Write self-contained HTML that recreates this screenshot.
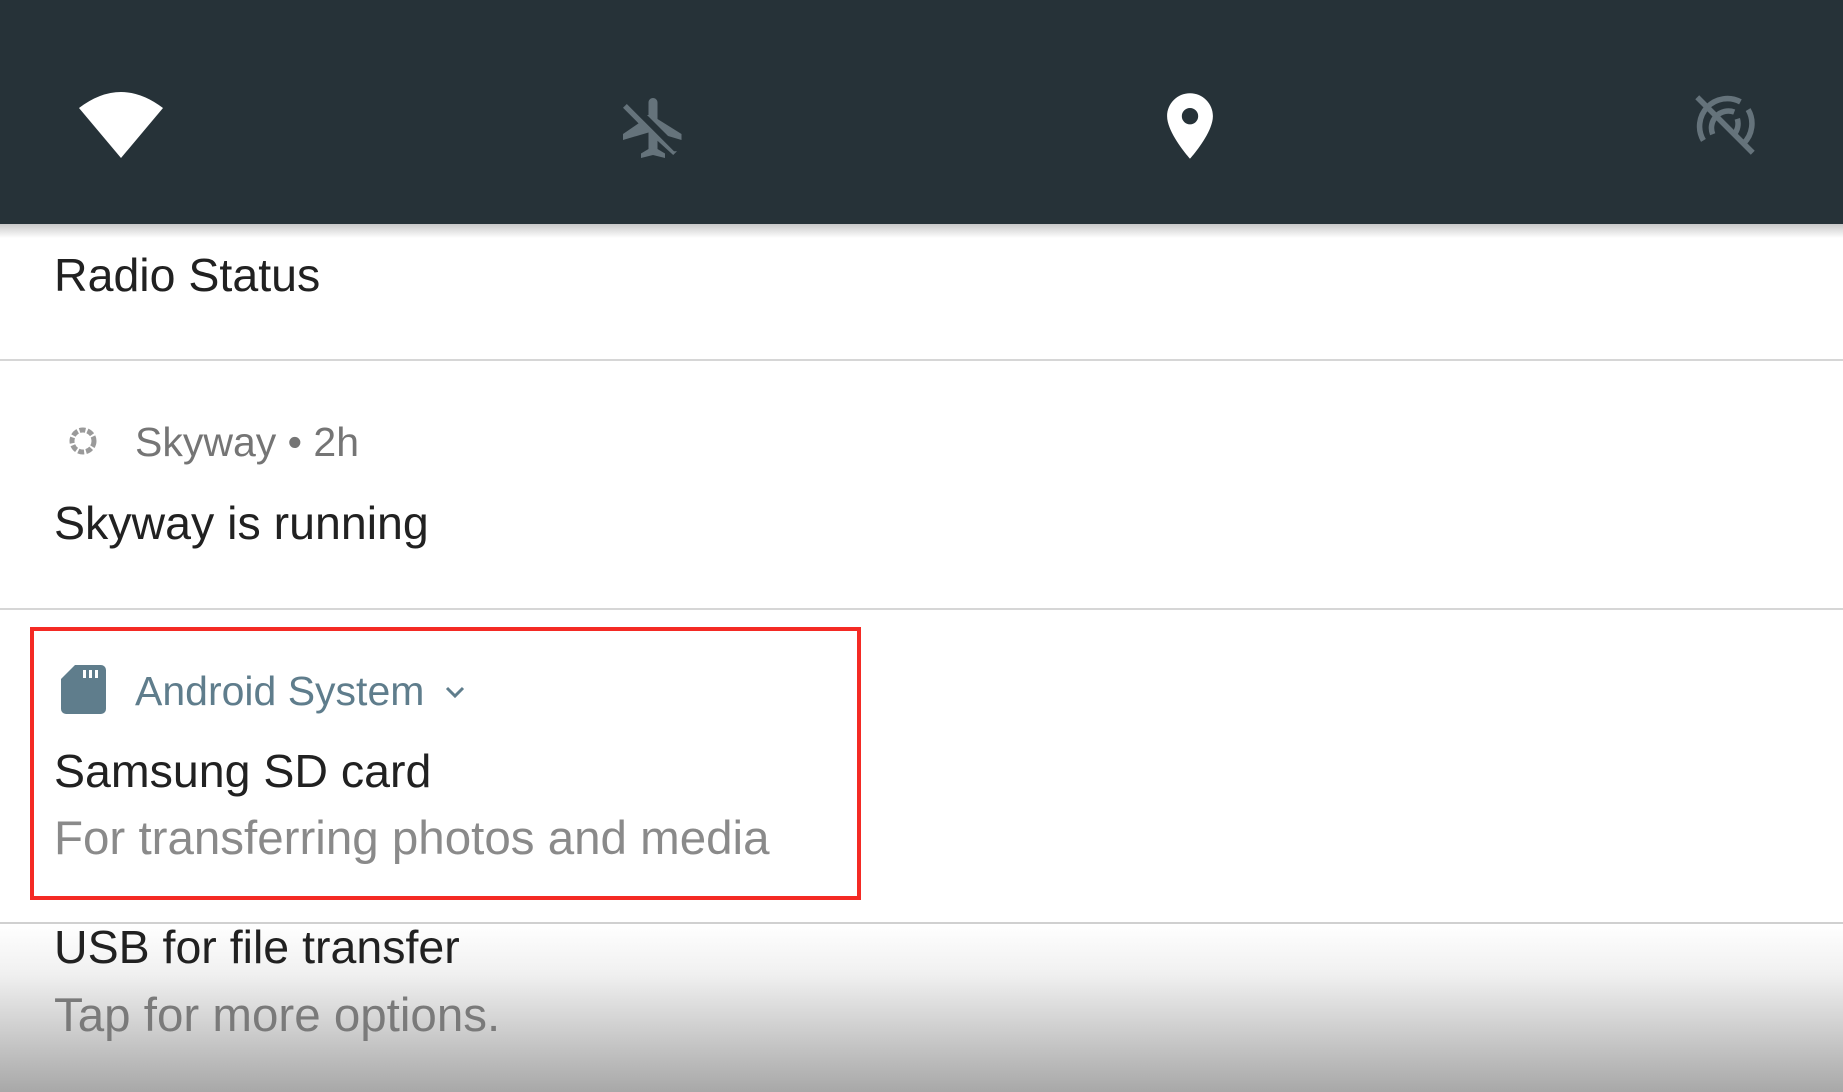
<!DOCTYPE html>
<html><head><style>
body{margin:0;width:1843px;height:1090px;overflow:hidden;background:#fff;font-family:"Liberation Sans",sans-serif;position:relative}
.t{position:absolute;white-space:nowrap;line-height:54px;height:54px}
.big{font-size:46.5px;color:#212121}
.sm{font-size:41px;color:#757575}
.hr{position:absolute;left:0;width:1843px;height:2px;background:#d6d6d6}
</style></head><body>
<div style="position:absolute;left:0;top:0;width:1843px;height:224px;background:#263238"></div>
<div style="position:absolute;left:0;top:224px;width:1843px;height:14px;background:linear-gradient(#c8c8c8,#fff)"></div>
<svg style="position:absolute;left:77px;top:88px" width="88" height="72" viewBox="0 0 88 72"><path d="M44 70 L2 20 Q44 -12 86 20 Z" fill="#fff"/></svg>
<svg style="position:absolute;left:617px;top:92px" width="72" height="72" viewBox="0 0 24 24"><path fill="#65737b" d="M10.5 7.67V3.5c0-.83.67-1.5 1.5-1.5s1.5.67 1.5 1.5V9l8 5v2l-4.49-1.32-7.01-7.01zM19 19.73 3.27 4 2 5.27l5.18 5.18L2 14v2l8.5-2.5V19L8 20.5V22l4-1 4 1v-1.5L13.5 19v-2.73L18.73 21 20 19.73z"/></svg>
<svg style="position:absolute;left:1158px;top:90px" width="64" height="72" viewBox="4 1 16 22"><path fill="#fff" d="M12 2C8.13 2 5 5.13 5 9c0 5.25 7 13 7 13s7-7.75 7-13c0-3.87-3.13-7-7-7zm0 9.5a2.5 2.5 0 1 1 0-5 2.5 2.5 0 0 1 0 5z"/></svg>
<svg style="position:absolute;left:1688px;top:88px" width="74" height="74" viewBox="0 0 24 24" fill="none" stroke="#65737b" stroke-width="1.8"><path d="M5 17A9 9 0 0 1 17 4.5"/><path d="M8 15a5.5 5.5 0 0 1 7-7.2"/><path d="M19.5 7A9 9 0 0 1 18 18"/><path d="M16 10a5.5 5.5 0 0 1-1 5"/><path d="M3 3l18 18"/></svg>

<div class="t big" style="left:54px;top:248px">Radio Status</div>
<div class="hr" style="top:359px"></div>

<svg style="position:absolute;left:66px;top:424px" width="34" height="34" viewBox="0 0 34 34"><circle cx="17" cy="17" r="11" fill="none" stroke="#9a9a9a" stroke-width="5" stroke-dasharray="6 2"/></svg>
<div class="t sm" style="left:135px;top:415px">Skyway • 2h</div>
<div class="t big" style="left:54px;top:496px">Skyway is running</div>
<div class="hr" style="top:608px"></div>

<div style="position:absolute;left:30px;top:627px;width:823px;height:265px;border:4px solid #f42a24"></div>
<svg style="position:absolute;left:61px;top:665px" width="45" height="49" viewBox="0 0 45 49"><path d="M14 0H40a5 5 0 0 1 5 5V44a5 5 0 0 1-5 5H5a5 5 0 0 1-5-5V14Z" fill="#5f7d8c"/><rect x="22" y="5" width="3" height="8" fill="#fff"/><rect x="28" y="5" width="3" height="8" fill="#fff"/><rect x="34" y="5" width="3" height="8" fill="#fff"/></svg>
<div class="t" style="left:135px;top:664px;font-size:41px;color:#5f7d8c">Android System</div>
<svg style="position:absolute;left:444px;top:684px" width="22" height="16" viewBox="0 0 22 16"><path d="M3 4l8 8 8-8" fill="none" stroke="#5f7d8c" stroke-width="3"/></svg>
<div class="t big" style="left:54px;top:744px">Samsung SD card</div>
<div class="t" style="left:54px;top:812px;font-size:47.5px;color:#8a8a8a">For transferring photos and media</div>

<div style="position:absolute;left:0;top:922px;width:1843px;height:168px;background:linear-gradient(#fff 0%,#f0f0f0 30%,#a8a8a8 100%);border-top:2px solid #d0d0d0"></div>
<div class="t big" style="left:54px;top:920px">USB for file transfer</div>
<div class="t" style="left:54px;top:989px;font-size:47.5px;color:#7a7a7a">Tap for more options.</div>
</body></html>
